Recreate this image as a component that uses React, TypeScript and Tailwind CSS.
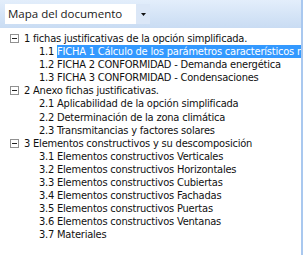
import React from "react";

// --- Tree data ---

interface Node {
  label: string;
  children: { num: string; text: string; selected?: boolean }[];
}

const tree: Node[] = [
  {
    label: "1 fichas justificativas de la opción simplificada.",
    children: [
      { num: "1.1", text: "FICHA 1 Cálculo de los parámetros característicos medios", selected: true },
      { num: "1.2", text: "FICHA 2 CONFORMIDAD - Demanda energética" },
      { num: "1.3", text: "FICHA 3 CONFORMIDAD - Condensaciones" },
    ],
  },
  {
    label: "2 Anexo fichas justificativas.",
    children: [
      { num: "2.1", text: "Aplicabilidad de la opción simplificada" },
      { num: "2.2", text: "Determinación de la zona climática" },
      { num: "2.3", text: "Transmitancias y factores solares" },
    ],
  },
  {
    label: "3 Elementos constructivos y su descomposición",
    children: [
      { num: "3.1", text: "Elementos constructivos Verticales" },
      { num: "3.2", text: "Elementos constructivos Horizontales" },
      { num: "3.3", text: "Elementos constructivos Cubiertas" },
      { num: "3.4", text: "Elementos constructivos Fachadas" },
      { num: "3.5", text: "Elementos constructivos Puertas" },
      { num: "3.6", text: "Elementos constructivos Ventanas" },
      { num: "3.7", text: "Materiales" },
    ],
  },
];

const MinusBox: React.FC = () => (
  <span className="w-[9px] h-[9px] border border-[#919191] bg-white flex items-center justify-center shrink-0">
    <span className="w-[5px] h-px bg-[#222]" />
  </span>
);

export default function App() {
  return (
    <div
      className="w-[303px] h-[255px] bg-white flex flex-col overflow-hidden border-r-2 border-[#a9c8ef]"
      style={{ fontFamily: "'DejaVu Sans Condensed', 'DejaVu Sans', sans-serif" }}
    >
      {/* Toolbar with dropdown */}
      <div className="h-[28px] shrink-0 bg-gradient-to-b from-[#e3eefb] to-[#c9dcf3] flex items-center pl-[5px]">
        <div className="w-[145px] h-[20px] bg-white flex items-center justify-between">
          <span
            className="pl-[3px] text-[11.5px] text-[#1a1a1a] leading-none"
            style={{ fontFamily: "'Open Sans', sans-serif" }}
          >
            Mapa del documento
          </span>
          <span className="w-[14px] h-[20px] bg-[#dbe7f7] flex items-center justify-center">
            <svg width="5" height="3" viewBox="0 0 5 3">
              <path d="M0 0h5L2.5 3z" fill="#111" />
            </svg>
          </span>
        </div>
      </div>

      {/* Tree */}
      <div className="pt-[4px] text-[11px] text-[#111] leading-[13.1px] whitespace-nowrap tracking-[-0.2px]">
        {tree.map((n) => (
          <div key={n.label}>
            <div className="flex items-center h-[13.1px] pl-[10px] gap-[5px]">
              <MinusBox />
              <span>{n.label}</span>
            </div>
            {n.children.map((c) => (
              <div key={c.num} className="flex h-[13.1px] pl-[39px]">
                <span className="w-[18px]">{c.num}</span>
                <span className={c.selected ? "bg-[#3399ff] text-white flex-1 overflow-hidden" : ""}>
                  {c.text}
                </span>
              </div>
            ))}
          </div>
        ))}
      </div>
    </div>
  );
}
